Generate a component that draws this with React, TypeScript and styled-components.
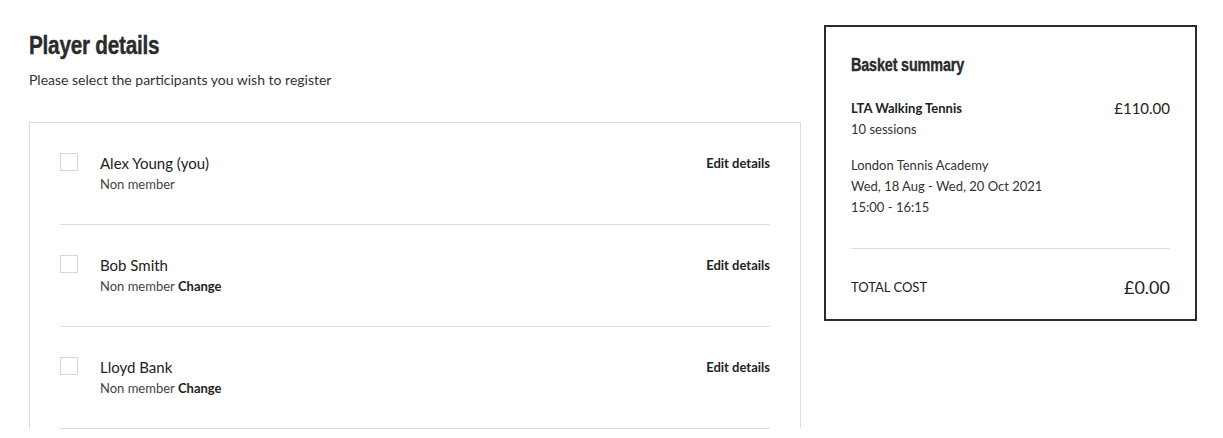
import React from 'react';
import styled, { createGlobalStyle } from 'styled-components';

const GlobalStyle = createGlobalStyle`
  html, body {
    margin: 0;
    padding: 0;
    background: #fff;
  }
  body {
    font-family: Lato, 'Noto Sans', sans-serif;
    color: #222;
  }
`;

const Page = styled.div`
  display: flex;
  align-items: flex-start;
  gap: 23px;
  padding: 25px 26px 0 29px;
  height: 438px;
  box-sizing: border-box;
  overflow: hidden;
`;

const Main = styled.div`
  width: 772px;
  flex-shrink: 0;
`;

// condensed display face: narrowed sans bold
const Condensed = styled.span<{ $scale?: number }>`
  display: inline-block;
  transform: scaleX(${(p) => p.$scale ?? 0.8});
  transform-origin: left center;
  white-space: nowrap;
  -webkit-text-stroke: 0.4px currentColor;
`;

const Title = styled.h1`
  margin: 5px 0 0;
  font-family: 'Liberation Sans', Arial, sans-serif;
  font-weight: 700;
  font-size: 25px;
  line-height: 30px;
  color: #2b2b2b;
  letter-spacing: -0.3px;
`;

const Intro = styled.p`
  margin: 10px 0 0;
  font-size: 14px;
  line-height: 20px;
  color: #333;
`;

const PlayerCard = styled.div`
  margin-top: 32px;
  border: 1px solid #dedede;
  border-bottom: none;
  padding: 0 30px;
`;

const PlayerRow = styled.div`
  display: flex;
  align-items: flex-start;
  padding: 30px 0 30px;
  border-bottom: 1px solid #dedede;
`;

const Checkbox = styled.span`
  width: 16px;
  height: 16px;
  border: 1px solid #d6d6d6;
  flex-shrink: 0;
  margin-right: 22px;
`;

const PlayerInfo = styled.div`
  flex: 1;
`;

const PlayerName = styled.div`
  font-size: 15px;
  line-height: 20px;
  color: #222;
`;

const Membership = styled.div`
  margin-top: 1px;
  font-size: 13px;
  line-height: 20px;
  color: #444;
`;

const Change = styled.span`
  font-weight: 700;
  color: #222;
`;

const EditLink = styled.a`
  font-size: 13px;
  font-weight: 700;
  line-height: 20px;
  color: #222;
  text-decoration: none;
  cursor: pointer;
`;

const Basket = styled.aside`
  width: 373px;
  box-sizing: border-box;
  border: 2px solid #2b2b2b;
  padding: 26px 25px 22px 25px;
`;

const BasketTitle = styled.h2`
  margin: 0;
  font-family: 'Liberation Sans', Arial, sans-serif;
  font-weight: 700;
  font-size: 18px;
  line-height: 24px;
  color: #2b2b2b;
  letter-spacing: -0.2px;
`;

const ItemRow = styled.div`
  display: flex;
  justify-content: space-between;
  align-items: flex-start;
  margin-top: 21px;
`;

const ItemName = styled.div`
  font-size: 13px;
  font-weight: 700;
  line-height: 20px;
  color: #222;
`;

const Price = styled.div<{ $large?: boolean }>`
  font-size: ${(p) => (p.$large ? '18px' : '15px')};
  line-height: 20px;
  color: #222;
`;

const Detail = styled.div<{ $gap?: number }>`
  margin-top: ${(p) => p.$gap ?? 1}px;
  font-size: 13px;
  line-height: 21px;
  color: #333;
`;

const Divider = styled.hr`
  border: none;
  border-top: 1px solid #dedede;
  margin: 30px 0 0;
`;

const TotalRow = styled.div`
  display: flex;
  justify-content: space-between;
  align-items: center;
  margin-top: 28px;
`;

const TotalLabel = styled.div`
  font-size: 13px;
  line-height: 20px;
  color: #222;
`;

const players = [
  { name: 'Alex Young (you)', canChange: false },
  { name: 'Bob Smith', canChange: true },
  { name: 'Lloyd Bank', canChange: true },
];

export default function App() {
  return (
    <>
      <GlobalStyle />
      <Page>
        <Main>
          <Title>
            <Condensed $scale={0.83}>Player details</Condensed>
          </Title>
          <Intro>Please select the participants you wish to register</Intro>
          <PlayerCard>
            {players.map((p) => (
              <PlayerRow key={p.name}>
                <Checkbox />
                <PlayerInfo>
                  <PlayerName>{p.name}</PlayerName>
                  <Membership>
                    Non member{p.canChange && <Change> Change</Change>}
                  </Membership>
                </PlayerInfo>
                <EditLink>Edit details</EditLink>
              </PlayerRow>
            ))}
          </PlayerCard>
        </Main>
        <Basket>
          <BasketTitle>
            <Condensed>Basket summary</Condensed>
          </BasketTitle>
          <ItemRow>
            <ItemName>LTA Walking Tennis</ItemName>
            <Price>£110.00</Price>
          </ItemRow>
          <Detail>10 sessions</Detail>
          <Detail $gap={15}>London Tennis Academy</Detail>
          <Detail $gap={0}>Wed, 18 Aug - Wed, 20 Oct 2021</Detail>
          <Detail $gap={0}>15:00 - 16:15</Detail>
          <Divider />
          <TotalRow>
            <TotalLabel>TOTAL COST</TotalLabel>
            <Price $large>£0.00</Price>
          </TotalRow>
        </Basket>
      </Page>
    </>
  );
}
